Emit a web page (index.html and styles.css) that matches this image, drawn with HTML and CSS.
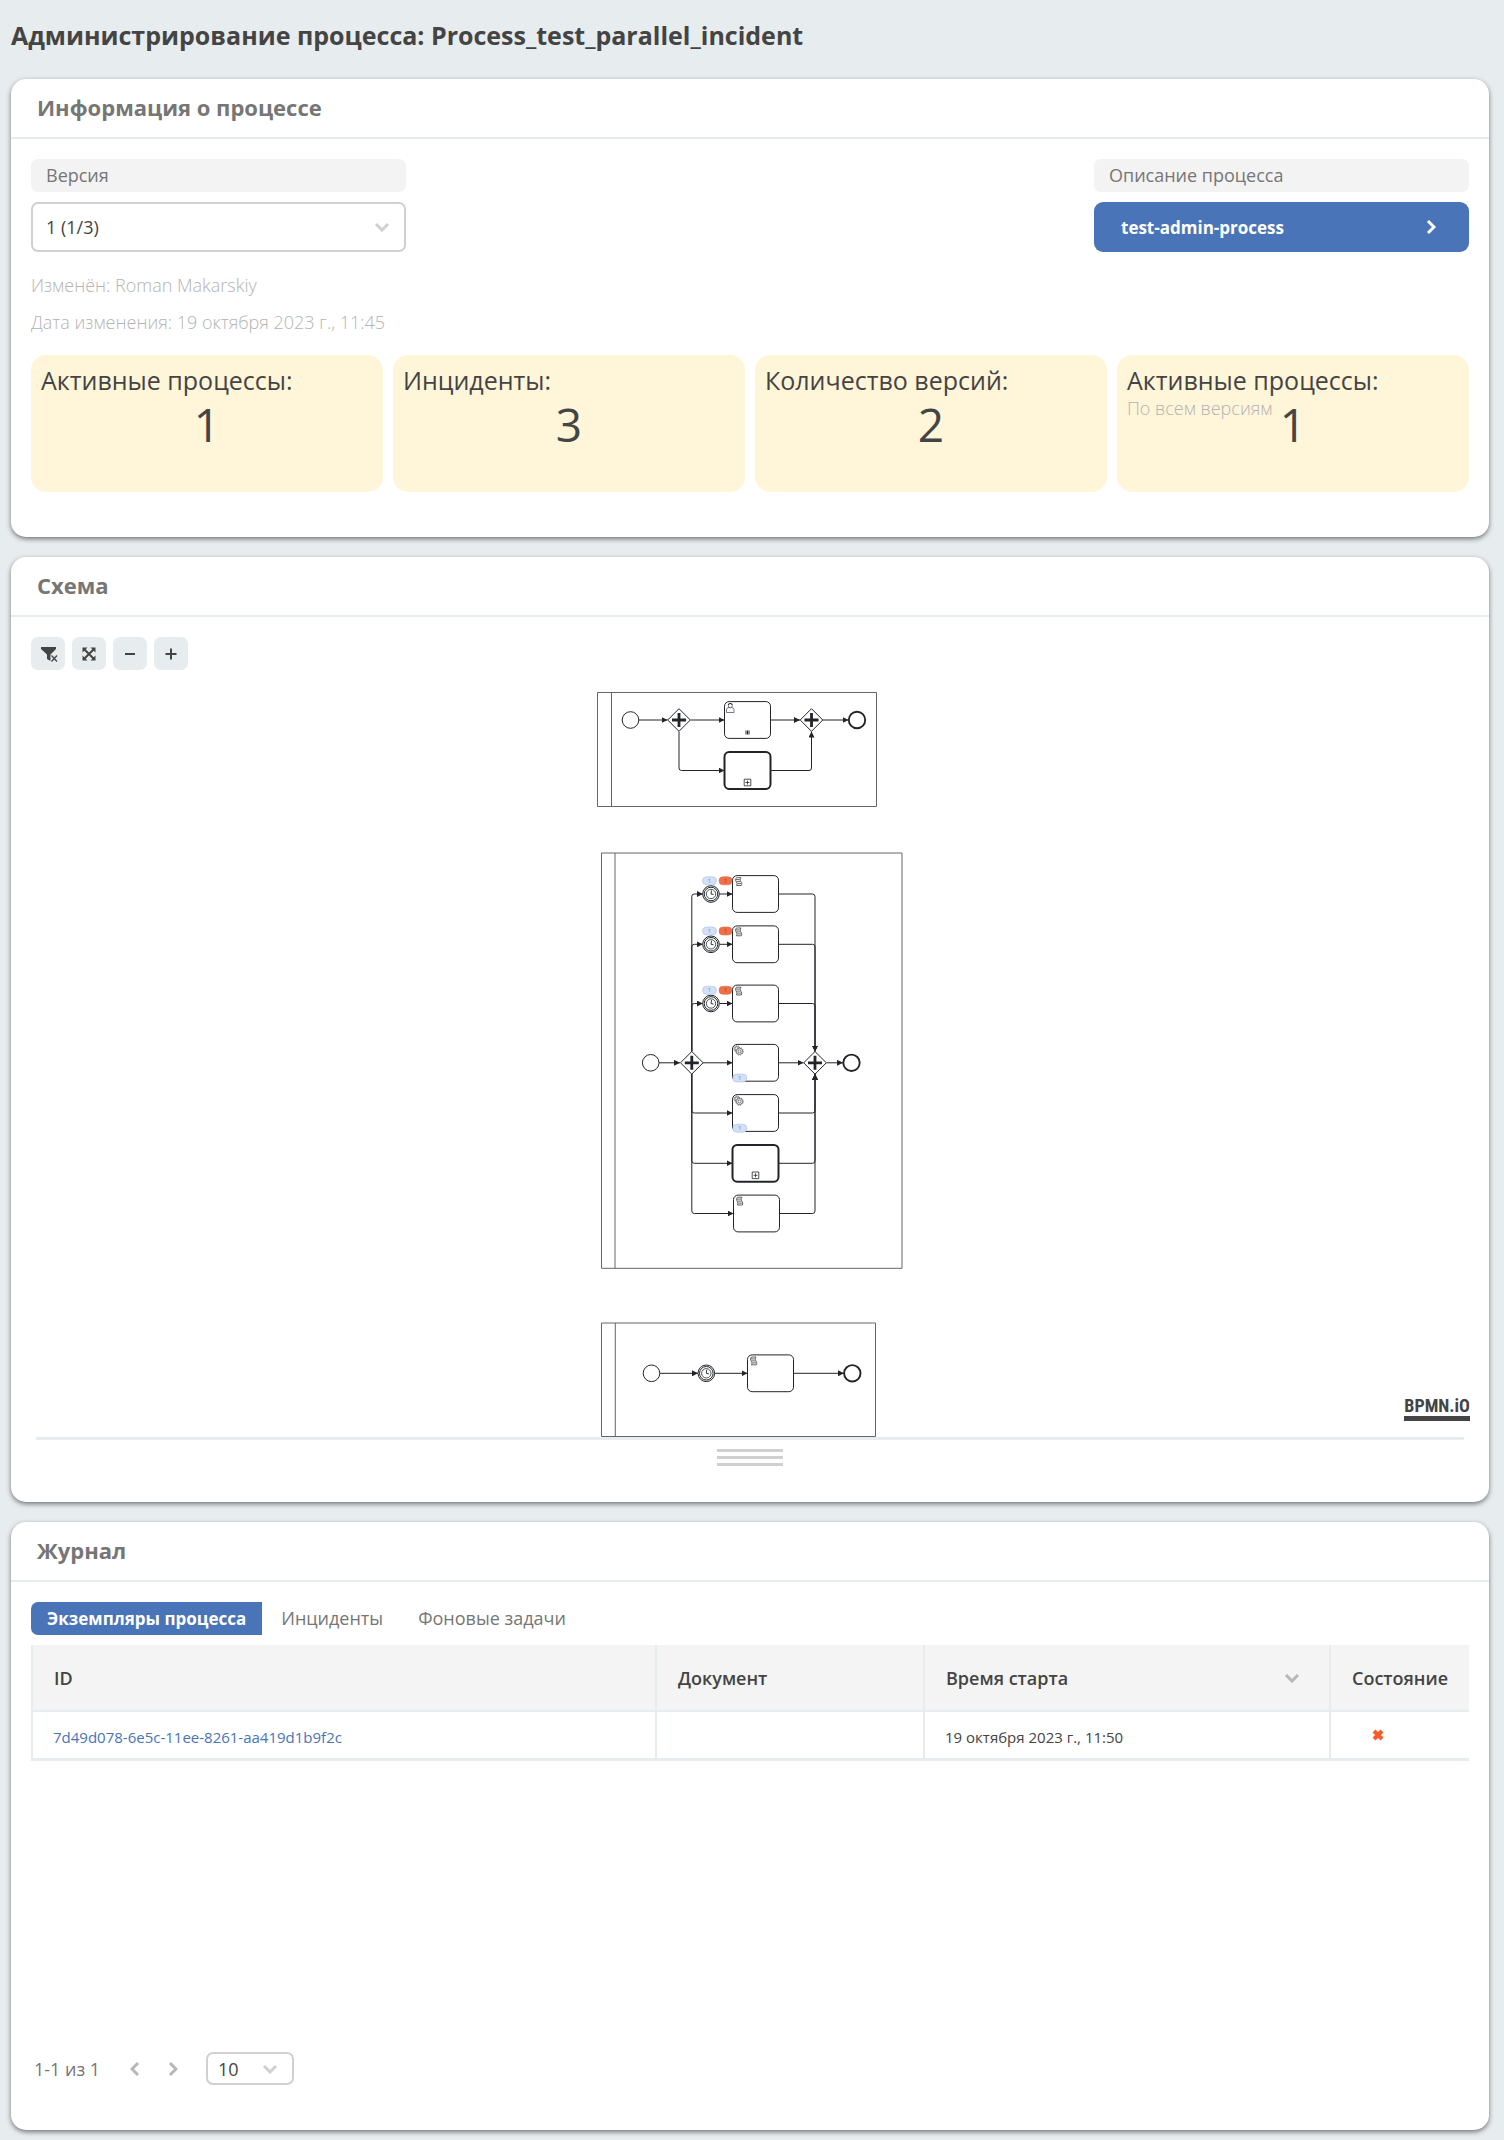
FILE: index.html
```html
<!DOCTYPE html>
<html lang="ru">
<head>
<meta charset="utf-8">
<meta name="viewport" content="width=device-width, initial-scale=1">
<title>Администрирование процесса</title>
<link rel="stylesheet" href="styles.css">
</head>
<body>
<main class="page">
  <h1 class="page-title">Администрирование процесса: Process_test_parallel_incident</h1>

  <section class="card">
    <h2 class="card-title">Информация о процессе</h2>
    <div class="card-body">
      <div class="fields">
        <div class="field">
          <label class="field-label" for="version">Версия</label>
          <div class="select-wrap">
            <select class="select" id="version"><option>1 (1/3)</option></select>
            <svg class="select-arrow" width="16" height="10" viewBox="0 0 16 10"><path d="M2 2l6 6 6-6"/></svg>
          </div>
        </div>
        <div class="field">
          <span class="field-label">Описание процесса</span>
          <a class="process-link" href="#">test-admin-process
            <svg width="10" height="16" viewBox="0 0 10 16"><path d="M2 2l6 6-6 6"/></svg>
          </a>
        </div>
      </div>
      <div class="meta">
        <p>Изменён: Roman Makarskiy</p>
        <p>Дата изменения: 19 октября 2023 г., 11:45</p>
      </div>
      <div class="stats">
        <div class="stat"><h3 class="stat-title">Активные процессы:</h3><p class="stat-value">1</p></div>
        <div class="stat"><h3 class="stat-title">Инциденты:</h3><p class="stat-value">3</p></div>
        <div class="stat"><h3 class="stat-title">Количество версий:</h3><p class="stat-value">2</p></div>
        <div class="stat"><h3 class="stat-title">Активные процессы:</h3><span class="stat-note">По всем версиям</span><p class="stat-value">1</p></div>
      </div>
    </div>
  </section>

  <section class="card">
    <h2 class="card-title">Схема</h2>
    <div class="card-body scheme">
      <div class="toolbar">
        <button class="tool" type="button" aria-label="Сбросить фильтр"><svg width="20" height="20" viewBox="0 0 20 20"><path class="fill" d="M3 3h15v2l-5.500 5.500V17L9 15v-4.500L3 5z"/><path d="M13.500 11.500l5.500 6M19 11.500l-5.500 6" stroke="#e7ecef" stroke-width="3"/><path d="M13.500 11.500l5.500 6M19 11.500l-5.500 6" stroke-width="1.300"/></svg></button>
        <button class="tool" type="button" aria-label="По размеру"><svg width="20" height="20" viewBox="0 0 20 20"><path d="M5 5l10 10M15 5L5 15" stroke-width="2"/><path class="fill" d="M3.500 3.500h5l-5 5zM16.500 3.500h-5l5 5zM3.500 16.500h5l-5-5zM16.500 16.500h-5l5-5z"/></svg></button>
        <button class="tool" type="button" aria-label="Уменьшить"><svg width="20" height="20" viewBox="0 0 20 20"><path d="M5 10h10" stroke-width="2"/></svg></button>
        <button class="tool" type="button" aria-label="Увеличить"><svg width="20" height="20" viewBox="0 0 20 20"><path d="M4.500 10h11M10 4.500v11" stroke-width="2"/></svg></button>
      </div>
      <div class="canvas">
        <svg class="diagram" width="340" height="757" viewBox="580 680 340 757">
          <defs>
            <marker id="arrow" viewBox="0 0 10 10" refX="10" refY="5" markerWidth="6" markerHeight="6" markerUnits="userSpaceOnUse" orient="auto"><path d="M0 0l10 5-10 5z" class="solid"/></marker>
            <g id="start"><circle r="8.300"/></g>
            <g id="end"><circle r="8.200" stroke-width="1.900"/></g>
            <g id="gate"><path d="M0-11.300L11.300 0 0 11.300-11.300 0z"/><path d="M-7 0H7M0-7V7" stroke-width="2.800"/></g>
            <g id="task"><rect x="-23" y="-18.400" width="46" height="36.800" rx="4.600"/></g>
            <g id="call"><rect x="-23" y="-18.400" width="46" height="36.800" rx="4.600" stroke-width="2"/><path d="M-3.300 8.700h6.600v6.600h-6.600zM-2 12H2M0 10v4" stroke-width="0.800"/></g>
            <g id="timer"><circle r="8.300"/><circle r="6.800"/><circle r="4.700" stroke-width="0.800"/><path d="M.5-3.500L0 0l2.600.5" stroke-width="0.900"/></g>
            <g id="script" stroke-width="0.700"><path d="M-14.500-16.300h-4.500c-3 3 2 4.800 0 7.800h4.800c2-3-3-4.800-.3-7.800zM-19.500-14.400h3.600M-18.800-12.400h3.600M-18-10.400h3.600"/></g>
            <g id="gears" stroke-width="0.600"><circle cx="-18.500" cy="-14" r="3" stroke-dasharray="1.200 0.900"/><circle cx="-18.500" cy="-14" r="2.200"/><circle cx="-16" cy="-11.500" r="3.800" stroke-dasharray="1.200 0.900"/><circle cx="-16" cy="-11.500" r="3.100"/><circle cx="-16" cy="-11.500" r="1.500"/></g>
            <g id="count"><rect x="-7" y="-4" width="14" height="8" rx="4" class="count"/><text y="2" class="count-text">1</text></g>
            <g id="fail"><rect x="-6.500" y="-4" width="13" height="8" rx="4" class="fail"/><text y="2" class="fail-text">1</text></g>
          </defs>

          <g class="pool"><path d="M597.500 692.500h279v114h-279zM611.500 692.500v114M601.500 853h300.500v415.300h-300.500zM615 853v415.300M601.500 1323h274v113.500h-274zM615.300 1323v113.500"/></g>

          <g class="flow">
            <path d="M639 720h28.500"/><path d="M690.500 720h34"/><path d="M770.500 720h29.500"/><path d="M823 720h25.500"/>
            <path d="M679 731.500v36.500q0 2.500 2.500 2.500h43"/><path d="M770.500 770.500h38.500q2.500 0 2.500-2.500v-36.500"/>
            <path d="M659 1062.800h21"/><path d="M703 1062.800h29.500"/><path d="M778.500 1062.800h25"/><path d="M826.500 1062.800h16.500"/>
            <path d="M691.800 1051.500V896.500q0-2.500 2.500-2.500h8.500"/><path d="M691.800 1051.500V946.800q0-2.500 2.500-2.500h8.500"/><path d="M691.800 1051.500V1006q0-2.500 2.500-2.500h8.500"/>
            <path d="M719.500 894h13"/><path d="M719.500 944.300h13"/><path d="M719.500 1003.500h13"/>
            <path d="M778.500 894h34q2.500 0 2.500 2.500v155"/><path d="M778.500 944.300h34q2.500 0 2.500 2.500v104.700"/><path d="M778.500 1003.500h34q2.500 0 2.500 2.500v45.500"/>
            <path d="M691.800 1074v36.500q0 2.500 2.500 2.500h38.200"/><path d="M691.800 1074v86.800q0 2.500 2.500 2.500h38.200"/><path d="M691.800 1074v137q0 2.500 2.500 2.500h39.200"/>
            <path d="M778.500 1113h34q2.500 0 2.500-2.500V1074"/><path d="M778.500 1163.300h34q2.500 0 2.500-2.500V1074"/><path d="M779.500 1213.500h33q2.500 0 2.500-2.500V1074"/>
            <path d="M660 1373.300h38"/><path d="M714.500 1373.300h33"/><path d="M793.500 1373.300h50.500"/>
          </g>

          <g class="nodes">
            <use href="#start" x="630.500" y="720"/><use href="#gate" x="679" y="720"/><use href="#task" x="747.500" y="720"/><use href="#gate" x="811.500" y="720"/><use href="#end" x="857" y="720"/><use href="#call" x="747.500" y="770.500"/>
            <path d="M726.500 712.500v-3q0-1.500 2.500-2h2.500q2.500.5 2.500 2v3z" stroke-width="0.600"/><circle cx="730.300" cy="705.800" r="2" stroke-width="0.600"/><path d="M728.400 705q.2-1.500 1.900-1.500t1.900 1.500" stroke-width="1.100"/>
            <path d="M746 730.500v4M747.500 730.500v4M749 730.500v4" stroke-width="1"/>

            <use href="#start" x="650.700" y="1062.800"/><use href="#gate" x="691.800" y="1062.800"/><use href="#gate" x="815" y="1062.800"/><use href="#end" x="851.500" y="1062.800"/>
            <use href="#timer" x="711" y="894"/><use href="#task" x="755.500" y="894"/><use href="#script" x="755.500" y="894"/>
            <use href="#timer" x="711" y="944.300"/><use href="#task" x="755.500" y="944.300"/><use href="#script" x="755.500" y="944.300"/>
            <use href="#timer" x="711" y="1003.500"/><use href="#task" x="755.500" y="1003.500"/><use href="#script" x="755.500" y="1003.500"/>
            <use href="#task" x="755.500" y="1062.800"/><use href="#gears" x="755.500" y="1062.800"/>
            <use href="#task" x="755.500" y="1113"/><use href="#gears" x="755.500" y="1113"/>
            <use href="#call" x="755.500" y="1163.300"/>
            <use href="#task" x="756.500" y="1213.500"/><use href="#script" x="756.500" y="1213.500"/>

            <use href="#start" x="651.500" y="1373.300"/><use href="#timer" x="706.300" y="1373.300"/><use href="#task" x="770.500" y="1373.300"/><use href="#script" x="770.500" y="1373.300"/><use href="#end" x="852.300" y="1373.300"/>
          </g>
          <use href="#count" x="709.500" y="880.800"/><use href="#fail" x="725.500" y="880.800"/>
          <use href="#count" x="709.500" y="931"/><use href="#fail" x="725.500" y="931"/>
          <use href="#count" x="709.500" y="990.300"/><use href="#fail" x="725.500" y="990.300"/>
          <use href="#count" x="739.800" y="1078"/><use href="#count" x="739.800" y="1128.200"/>
        </svg>
        <a class="bpmn-logo" href="#">BPMN.iO</a>
      </div>
      <div class="grip"><i></i><i></i><i></i></div>
    </div>
  </section>

  <section class="card">
    <h2 class="card-title">Журнал</h2>
    <div class="card-body journal">
      <div class="tabs" role="tablist">
        <button class="tab tab-active" type="button" role="tab" aria-selected="true">Экземпляры процесса</button>
        <button class="tab" type="button" role="tab">Инциденты</button>
        <button class="tab" type="button" role="tab">Фоновые задачи</button>
      </div>
      <div class="table-area">
        <table class="table">
          <colgroup><col class="col-id"><col class="col-doc"><col class="col-time"><col></colgroup>
          <thead>
            <tr>
              <th>ID</th>
              <th>Документ</th>
              <th><div class="sortable">Время старта <svg width="16" height="10" viewBox="0 0 16 10"><path d="M2 2l6 6 6-6"/></svg></div></th>
              <th>Состояние</th>
            </tr>
          </thead>
          <tbody>
            <tr>
              <td><a class="id-link" href="#">7d49d078-6e5c-11ee-8261-aa419d1b9f2c</a></td>
              <td></td>
              <td>19 октября 2023 г., 11:50</td>
              <td><svg class="state-icon" width="12" height="12" viewBox="0 0 12 12"><path d="M2 2l8 8M10 2l-8 8"/></svg></td>
            </tr>
          </tbody>
        </table>
      </div>
      <div class="pager">
        <span class="pager-text">1-1 из 1</span>
        <button class="pager-btn" type="button" aria-label="Назад"><svg width="10" height="16" viewBox="0 0 10 16"><path d="M8 2L2 8l6 6"/></svg></button>
        <button class="pager-btn" type="button" aria-label="Вперёд"><svg width="10" height="16" viewBox="0 0 10 16"><path d="M2 2l6 6-6 6"/></svg></button>
        <div class="select-wrap page-size">
          <select class="select" aria-label="Записей на странице"><option>10</option></select>
          <svg class="select-arrow" width="16" height="10" viewBox="0 0 16 10"><path d="M2 2l6 6 6-6"/></svg>
        </div>
      </div>
    </div>
  </section>
</main>
</body>
</html>
```
FILE: styles.css
```css
* { box-sizing: border-box; }

body {
  margin: 0;
  background: #e7ecef;
  color: #444;
  font-family: "Open Sans", "Noto Sans", sans-serif;
  font-size: 18px;
}

h1, h2, h3, p { margin: 0; }

button, select { font: inherit; color: inherit; margin: 0; }

svg { fill: none; stroke: currentColor; display: block; }

.page { padding: 0 15px 10px 11px; }

.page-title {
  margin-bottom: 9px;
  font-size: 25px;
  font-weight: 700;
  line-height: 70px;
}

.card {
  background: #fff;
  border-radius: 15px;
  box-shadow: 0 2px 5px rgba(0, 0, 0, 0.5);
}

.card + .card { margin-top: 20px; }

.card-title {
  padding: 0 26px 2px;
  border-bottom: 2px solid #e7ecef;
  color: #767676;
  font-size: 22px;
  font-weight: 700;
  line-height: 56px;
}

.card-body { padding: 20px 20px 45px; }

.fields { display: flex; justify-content: space-between; }

.field {
  display: flex;
  flex-direction: column;
  gap: 10px;
  width: 375px;
}

.field-label {
  padding: 0 15px;
  border-radius: 7px;
  background: #f3f3f3;
  color: #767676;
  font-weight: 500;
  line-height: 33px;
}

.select-wrap { position: relative; }

.select {
  width: 100%;
  height: 50px;
  padding: 0 13px;
  border: 2px solid #d0d0d0;
  border-radius: 7px;
  background: #fff;
  appearance: none;
}

.select-arrow {
  position: absolute;
  top: 50%;
  right: 16px;
  transform: translateY(-50%);
  color: #d0d0d0;
  stroke-width: 3;
  pointer-events: none;
}

.process-link {
  display: flex;
  align-items: center;
  justify-content: space-between;
  height: 50px;
  padding: 0 33px 0 27px;
  border-radius: 9px;
  background: #4a74b8;
  color: #fff;
  font-size: 17px;
  font-weight: 700;
  text-decoration: none;
}

.process-link svg { stroke-width: 3; }

.meta {
  margin: 15px 0 14px;
  color: #b4b4b4;
  font-weight: 350;
  line-height: 37px;
}

.stats {
  display: grid;
  grid-template-columns: repeat(4, 1fr);
  gap: 10px;
}

.stat {
  position: relative;
  height: 137px;
  padding: 9px 10px;
  border-radius: 15px;
  background: #fff5d9;
}

.stat-title {
  font-size: 25px;
  font-weight: 400;
  line-height: 32px;
}

.stat-note {
  position: absolute;
  top: 41px;
  left: 10px;
  color: #b4b4b4;
  font-weight: 350;
  line-height: 24px;
}

.stat-value {
  font-size: 46px;
  line-height: 56px;
  text-align: center;
}

.scheme { padding-bottom: 36px; }

.toolbar { display: flex; gap: 7px; margin-bottom: 10px; }

.tool {
  display: flex;
  align-items: center;
  justify-content: center;
  width: 34px;
  height: 33px;
  padding: 0;
  border: 0;
  border-radius: 7px;
  background: #e7ecef;
}

.tool .fill { fill: currentColor; stroke: none; }

.canvas {
  position: relative;
  display: flex;
  justify-content: center;
  margin: 0 5px;
  border-bottom: 3px solid #e7ecef;
}

.diagram { color: #22242a; }
.diagram .solid { fill: #22242a; stroke: none; }
.pool { stroke: #666; stroke-width: 1; }
.flow { stroke-width: 1; }
.flow path { marker-end: url(#arrow); }
.nodes { fill: #fff; stroke-width: 1; }
.count { fill: #d3e0f5; stroke: #a9c0e6; stroke-width: 0.600; }
.fail { fill: #f26e47; stroke: #e06a48; stroke-width: 0.600; }
.count-text, .fail-text { stroke: none; fill: #7c8aa3; font-size: 6px; text-anchor: middle; }
.fail-text { fill: #8f4433; }

.bpmn-logo {
  position: absolute;
  right: -6px;
  bottom: 16px;
  border-bottom: 5px solid #444;
  color: #444;
  font-family: "Roboto Condensed", "Liberation Sans", sans-serif;
  font-size: 18px;
  font-weight: 700;
  line-height: 20px;
  text-decoration: none;
}

.grip {
  display: flex;
  flex-direction: column;
  align-items: center;
  gap: 4px;
  padding-top: 9px;
}

.grip i { width: 66px; height: 3px; background: #d0d0d0; }

.tabs { display: flex; gap: 3px; margin-bottom: 10px; }

.tab {
  height: 33px;
  padding: 0 16px 1px;
  border: 0;
  background: none;
  color: #767676;
  font-weight: 500;
}

.tab-active {
  border-radius: 7px 0 0 7px;
  background: #4a74b8;
  color: #fff;
  font-size: 17px;
  font-weight: 700;
}

.table-area { min-height: 407px; }

.table {
  width: 100%;
  border-collapse: separate;
  border-spacing: 0;
  border-bottom: 1px solid #e7ecef;
  table-layout: fixed;
}

.col-id { width: 624px; }
.col-doc { width: 268px; }
.col-time { width: 406px; }

.table th, .table td {
  padding: 0 21px;
  border-left: 2px solid #e7ecef;
  border-bottom: 2px solid #e7ecef;
  text-align: left;
  white-space: nowrap;
}

.table th { height: 67px; background: #f4f4f4; font-weight: 600; }
.table td { height: 48px; padding: 4px 20px 0; font-size: 15px; }

.sortable { display: flex; align-items: center; justify-content: space-between; padding-right: 8px; }
.sortable svg { color: #b7b7b7; stroke-width: 3; }

.id-link { color: #4a74b8; text-decoration: none; }

.state-icon { margin: 0 0 4px 21px; color: #fc5a26; stroke-width: 4; }

.pager { display: flex; align-items: center; height: 33px; padding-left: 3px; }

.pager-text { width: 86px; color: #767676; }

.pager-btn {
  display: flex;
  justify-content: center;
  width: 30px;
  margin-right: 8px;
  padding: 0;
  border: 0;
  background: none;
  color: #b7b7b7;
}

.pager-btn svg { stroke-width: 3; }

.page-size { width: 88px; margin-left: 10px; }
.page-size .select { height: 33px; padding: 0 10px; }
```
